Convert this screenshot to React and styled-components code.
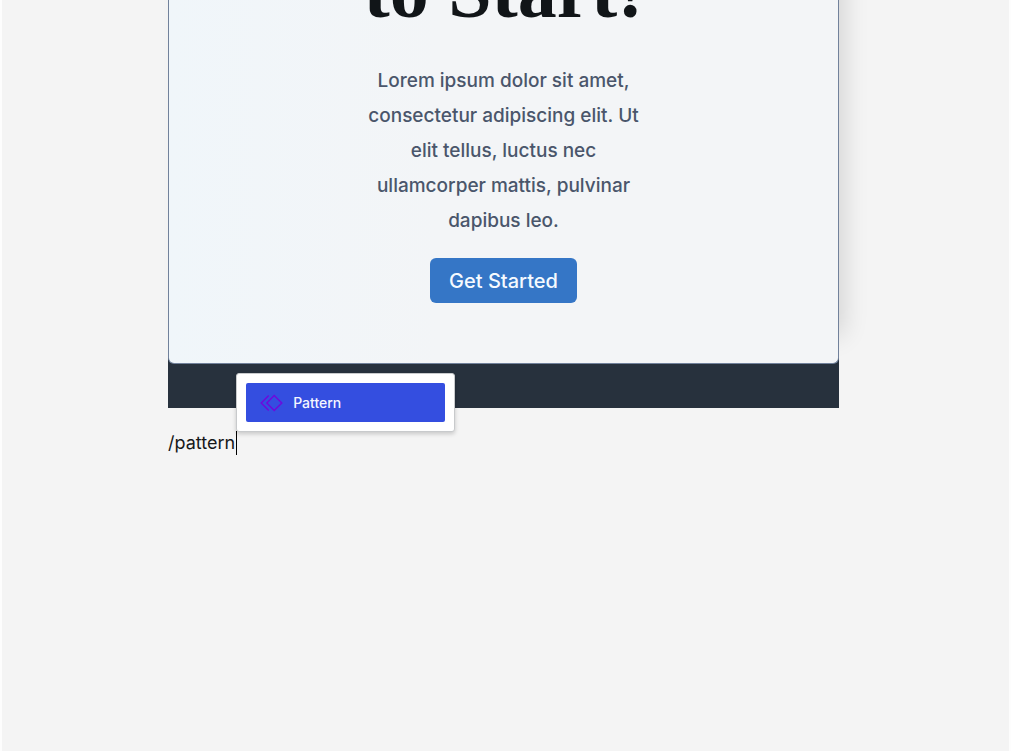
import React from "react";
import styled, { createGlobalStyle } from "styled-components";

const GlobalStyle = createGlobalStyle`
  *, *::before, *::after { box-sizing: border-box; }
  body { margin: 0; background: #f4f4f4; font-family: Inter, "Liberation Sans", sans-serif; }
`;

const Page = styled.main`
  min-height: 100vh;
  padding-right: 4px;
  border-left: 2px solid #fdfdfd;
  border-right: 2px solid #fdfdfd;
  background: #f4f4f4;
  overflow: hidden;
`;

const Column = styled.div`
  max-width: 671px;
  margin: 0 auto;
`;

const Section = styled.section`
  padding-bottom: 44px;
  background: #27313d;
  box-shadow: 12px -65px 24px -8px rgba(0, 0, 0, 0.14);
`;

const Card = styled.div`
  display: flex;
  flex-direction: column;
  align-items: center;
  padding: 0 20px 60px;
  border: 1px solid #71819b;
  border-top: 0;
  border-radius: 0 0 6px 6px;
  background: linear-gradient(90deg, #f0f6fa, #f3f5f7 40%);
  text-align: center;
`;

const Heading = styled.h2`
  margin: -49px 0 0;
  color: #111518;
  font: 700 78px/80px "Liberation Serif", serif;
`;

const Lead = styled.p`
  max-width: 290px;
  margin: 32px 0 20px;
  color: #4a566b;
  font-size: 19px;
  font-weight: 500;
  line-height: 35px;
`;

const Action = styled.button`
  height: 45px;
  padding: 0 19px;
  border: 0;
  border-radius: 6px;
  background: #3576c6;
  color: #f5faff;
  font: 500 20px/24px Inter, "Liberation Sans", sans-serif;
`;

const Prompt = styled.div`
  position: relative;
  display: flex;
  width: fit-content;
  margin-top: 23px;
`;

const CommandInput = styled.input`
  field-sizing: content;
  height: 24px;
  padding: 0;
  border: 0;
  outline: 0;
  background: transparent;
  color: #16181a;
  font: 400 18px/24px Inter, "Liberation Sans", sans-serif;
`;

const Caret = styled.span`
  width: 1px;
  height: 24px;
  margin-left: 1px;
  background: #000;
`;

const Menu = styled.div`
  position: absolute;
  bottom: 100%;
  left: 100%;
  width: 219px;
  margin: 0 0 -1px -1px;
  padding: 9px;
  border: 1px solid #c8cacc;
  border-radius: 3px;
  background: #fff;
  box-shadow: 0 2px 4px rgba(0, 0, 0, 0.18);
`;

const MenuItem = styled.button`
  display: flex;
  align-items: center;
  gap: 10px;
  width: 100%;
  height: 39px;
  padding: 0 13px;
  border: 0;
  border-radius: 2px;
  background: #344ee0;
  color: #f4f6ff;
  font: 500 14px/16px Inter, "Liberation Sans", sans-serif;
`;

function PatternIcon() {
  return (
    <svg width="24" height="24" viewBox="0 0 24 24" fill="none" stroke="#6f08dc" strokeWidth="1.4" aria-hidden="true">
      <path d="M15.2 4.5 22.8 12 15.2 19.5 7.8 12Z" />
      <path d="M9.7 4.5 2.2 12l7.5 7.5" />
    </svg>
  );
}

export default function App() {
  return (
    <>
      <GlobalStyle />
      <Page>
        <Column>
          <Section>
            <Card>
              <Heading>to Start!</Heading>
              <Lead>
                Lorem ipsum dolor sit amet, consectetur adipiscing elit. Ut elit tellus, luctus nec
                ullamcorper mattis, pulvinar dapibus leo.
              </Lead>
              <Action type="button">Get Started</Action>
            </Card>
          </Section>
          <Prompt>
            <CommandInput type="text" aria-label="Block command" defaultValue="/pattern" />
            <Caret />
            <Menu>
              <MenuItem type="button">
                <PatternIcon />
                Pattern
              </MenuItem>
            </Menu>
          </Prompt>
        </Column>
      </Page>
    </>
  );
}
